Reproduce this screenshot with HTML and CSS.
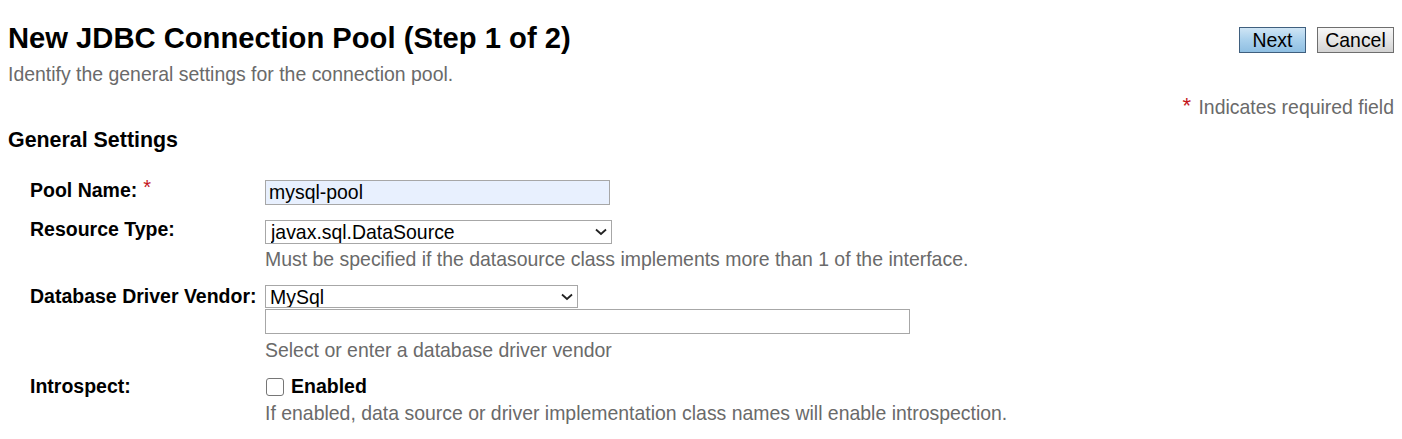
FILE: index.html
```html
<!DOCTYPE html>
<html>
<head>
<meta charset="utf-8">
<title>New JDBC Connection Pool</title>
<link rel="stylesheet" href="styles.css">
</head>
<body>
<div class="page">
  <div class="header">
    <div class="title-block">
      <h1 class="title">New JDBC Connection Pool (Step 1 of 2)</h1>
      <p class="subtitle">Identify the general settings for the connection pool.</p>
    </div>
    <div class="buttons">
      <button class="btn btn-primary">Next</button>
      <button class="btn btn-secondary">Cancel</button>
    </div>
  </div>
  <div class="required-note"><span class="req">*</span> Indicates required field</div>
  <h2 class="section-title">General Settings</h2>

  <div class="form">
    <div class="row row-pool">
      <div class="label">Pool Name:<span class="req req-label">*</span></div>
      <div class="field">
        <input class="text-input input-pool" type="text" value="mysql-pool">
      </div>
    </div>

    <div class="row row-type">
      <div class="label">Resource Type:</div>
      <div class="field">
        <span class="select-wrap select-type">
          <select class="select"><option>javax.sql.DataSource</option></select>
          <svg class="chevron" width="12" height="8" viewBox="0 0 12 8"><path d="M1 1.5 L6 6 L11 1.5" fill="none" stroke="#222" stroke-width="1.8"/></svg>
        </span>
        <div class="hint hint-type">Must be specified if the datasource class implements more than 1 of the interface.</div>
      </div>
    </div>

    <div class="row row-vendor">
      <div class="label">Database Driver Vendor:</div>
      <div class="field">
        <span class="select-wrap select-vendor">
          <select class="select"><option>MySql</option></select>
          <svg class="chevron" width="12" height="8" viewBox="0 0 12 8"><path d="M1 1.5 L6 6 L11 1.5" fill="none" stroke="#222" stroke-width="1.8"/></svg>
        </span>
        <input class="text-input input-vendor" type="text" value="">
        <div class="hint hint-vendor">Select or enter a database driver vendor</div>
      </div>
    </div>

    <div class="row row-intro">
      <div class="label">Introspect:</div>
      <div class="field">
        <label class="check-line"><input class="checkbox" type="checkbox"><span class="check-text">Enabled</span></label>
        <div class="hint hint-intro">If enabled, data source or driver implementation class names will enable introspection.</div>
      </div>
    </div>
  </div>
</div>
</body>
</html>
```
FILE: styles.css
```css
* { box-sizing: border-box; }
html, body {
  margin: 0;
  padding: 0;
  background: #fff;
}
body {
  font-family: "Liberation Sans", Arial, sans-serif;
  color: #000;
}
.page {
  padding: 0 8px;
}
.header {
  display: flex;
  justify-content: space-between;
  align-items: flex-start;
}
.title {
  margin: 0;
  padding-top: 22px;
  font-size: 29.2px;
  line-height: 33px;
  font-weight: bold;
}
.subtitle {
  margin: 8px 0 0;
  font-size: 19.45px;
  line-height: 22px;
  color: #6a6a6a;
}
.buttons {
  display: flex;
  gap: 11px;
  margin-top: 27px;
}
.btn {
  height: 26px;
  padding: 0 6px;
  font-family: "Liberation Sans", Arial, sans-serif;
  font-size: 19.45px;
  line-height: 22px;
  color: #000;
  border-radius: 0;
}
.btn-primary {
  width: 67px;
  border: 1px solid #3f5f7e;
  background: linear-gradient(#cfe5f5, #a9d0ec 50%, #8fbfe2);
}
.btn-secondary {
  width: 77px;
  border: 1px solid #6e6e6e;
  background: linear-gradient(#f7f7f7, #e6e6e6 50%, #d2d2d2);
}
.req {
  color: #c4161c;
  line-height: 0;
}
.required-note {
  margin-top: 11px;
  text-align: right;
  font-size: 19.45px;
  line-height: 22px;
  color: #6a6a6a;
}
.required-note .req {
  font-size: 22px;
  vertical-align: 1px;
  margin-right: 2px;
}
.section-title {
  margin: 10px 0 0;
  font-size: 21.4px;
  line-height: 25px;
  font-weight: bold;
}
.form {
  padding-left: 22px;
}
.row {
  display: grid;
  grid-template-columns: 235px 1fr;
  align-items: start;
}
.label {
  font-size: 19.5px;
  line-height: 22px;
  font-weight: bold;
}
.req-label {
  font-size: 20px;
  font-weight: normal;
  vertical-align: 3px;
  margin-left: 6px;
}
.field {
  display: flex;
  flex-direction: column;
  align-items: flex-start;
}
.row-pool { margin-top: 26px; }
.row-type { margin-top: 13px; }
.row-vendor { margin-top: 15px; }
.row-intro { margin-top: 14px; }

.text-input {
  height: 25px;
  border: 1px solid #a7a7a7;
  padding: 0 3px;
  font-family: "Liberation Sans", Arial, sans-serif;
  font-size: 19.45px;
  color: #000;
  outline: none;
}
.input-pool {
  width: 345px;
  margin-top: 1px;
  background: #e8f0fe;
}
.input-vendor {
  width: 645px;
  margin-top: 1px;
  background: #fff;
}
.select-wrap {
  position: relative;
  display: block;
}
.select {
  -webkit-appearance: none;
  appearance: none;
  display: block;
  width: 100%;
  height: 100%;
  border: 1px solid #a7a7a7;
  border-radius: 0;
  background: #fff;
  padding: 0 20px 0 5px;
  font-family: "Liberation Sans", Arial, sans-serif;
  font-size: 19.45px;
  color: #000;
  outline: none;
}
.select-type {
  width: 347px;
  height: 24px;
  margin-top: 2px;
}
.select-vendor {
  width: 313px;
  height: 23px;
}
.select-vendor .select { padding-left: 4px; }
.chevron {
  position: absolute;
  right: 5px;
  top: 50%;
  margin-top: -4px;
  pointer-events: none;
}
.hint {
  font-size: 19.45px;
  line-height: 22px;
  color: #6a6a6a;
}
.hint-type { margin-top: 4px; }
.hint-vendor { margin-top: 5px; }
.hint-intro { margin-top: 5px; }
.check-line {
  display: flex;
  align-items: center;
  height: 22px;
}
.checkbox {
  -webkit-appearance: none;
  appearance: none;
  width: 18px;
  height: 18px;
  margin: 2px 7px 0 1px;
  border: 1.5px solid #767676;
  border-radius: 3px;
  background: #fff;
}
.check-text {
  font-size: 19.5px;
  line-height: 22px;
  font-weight: bold;
}
```
